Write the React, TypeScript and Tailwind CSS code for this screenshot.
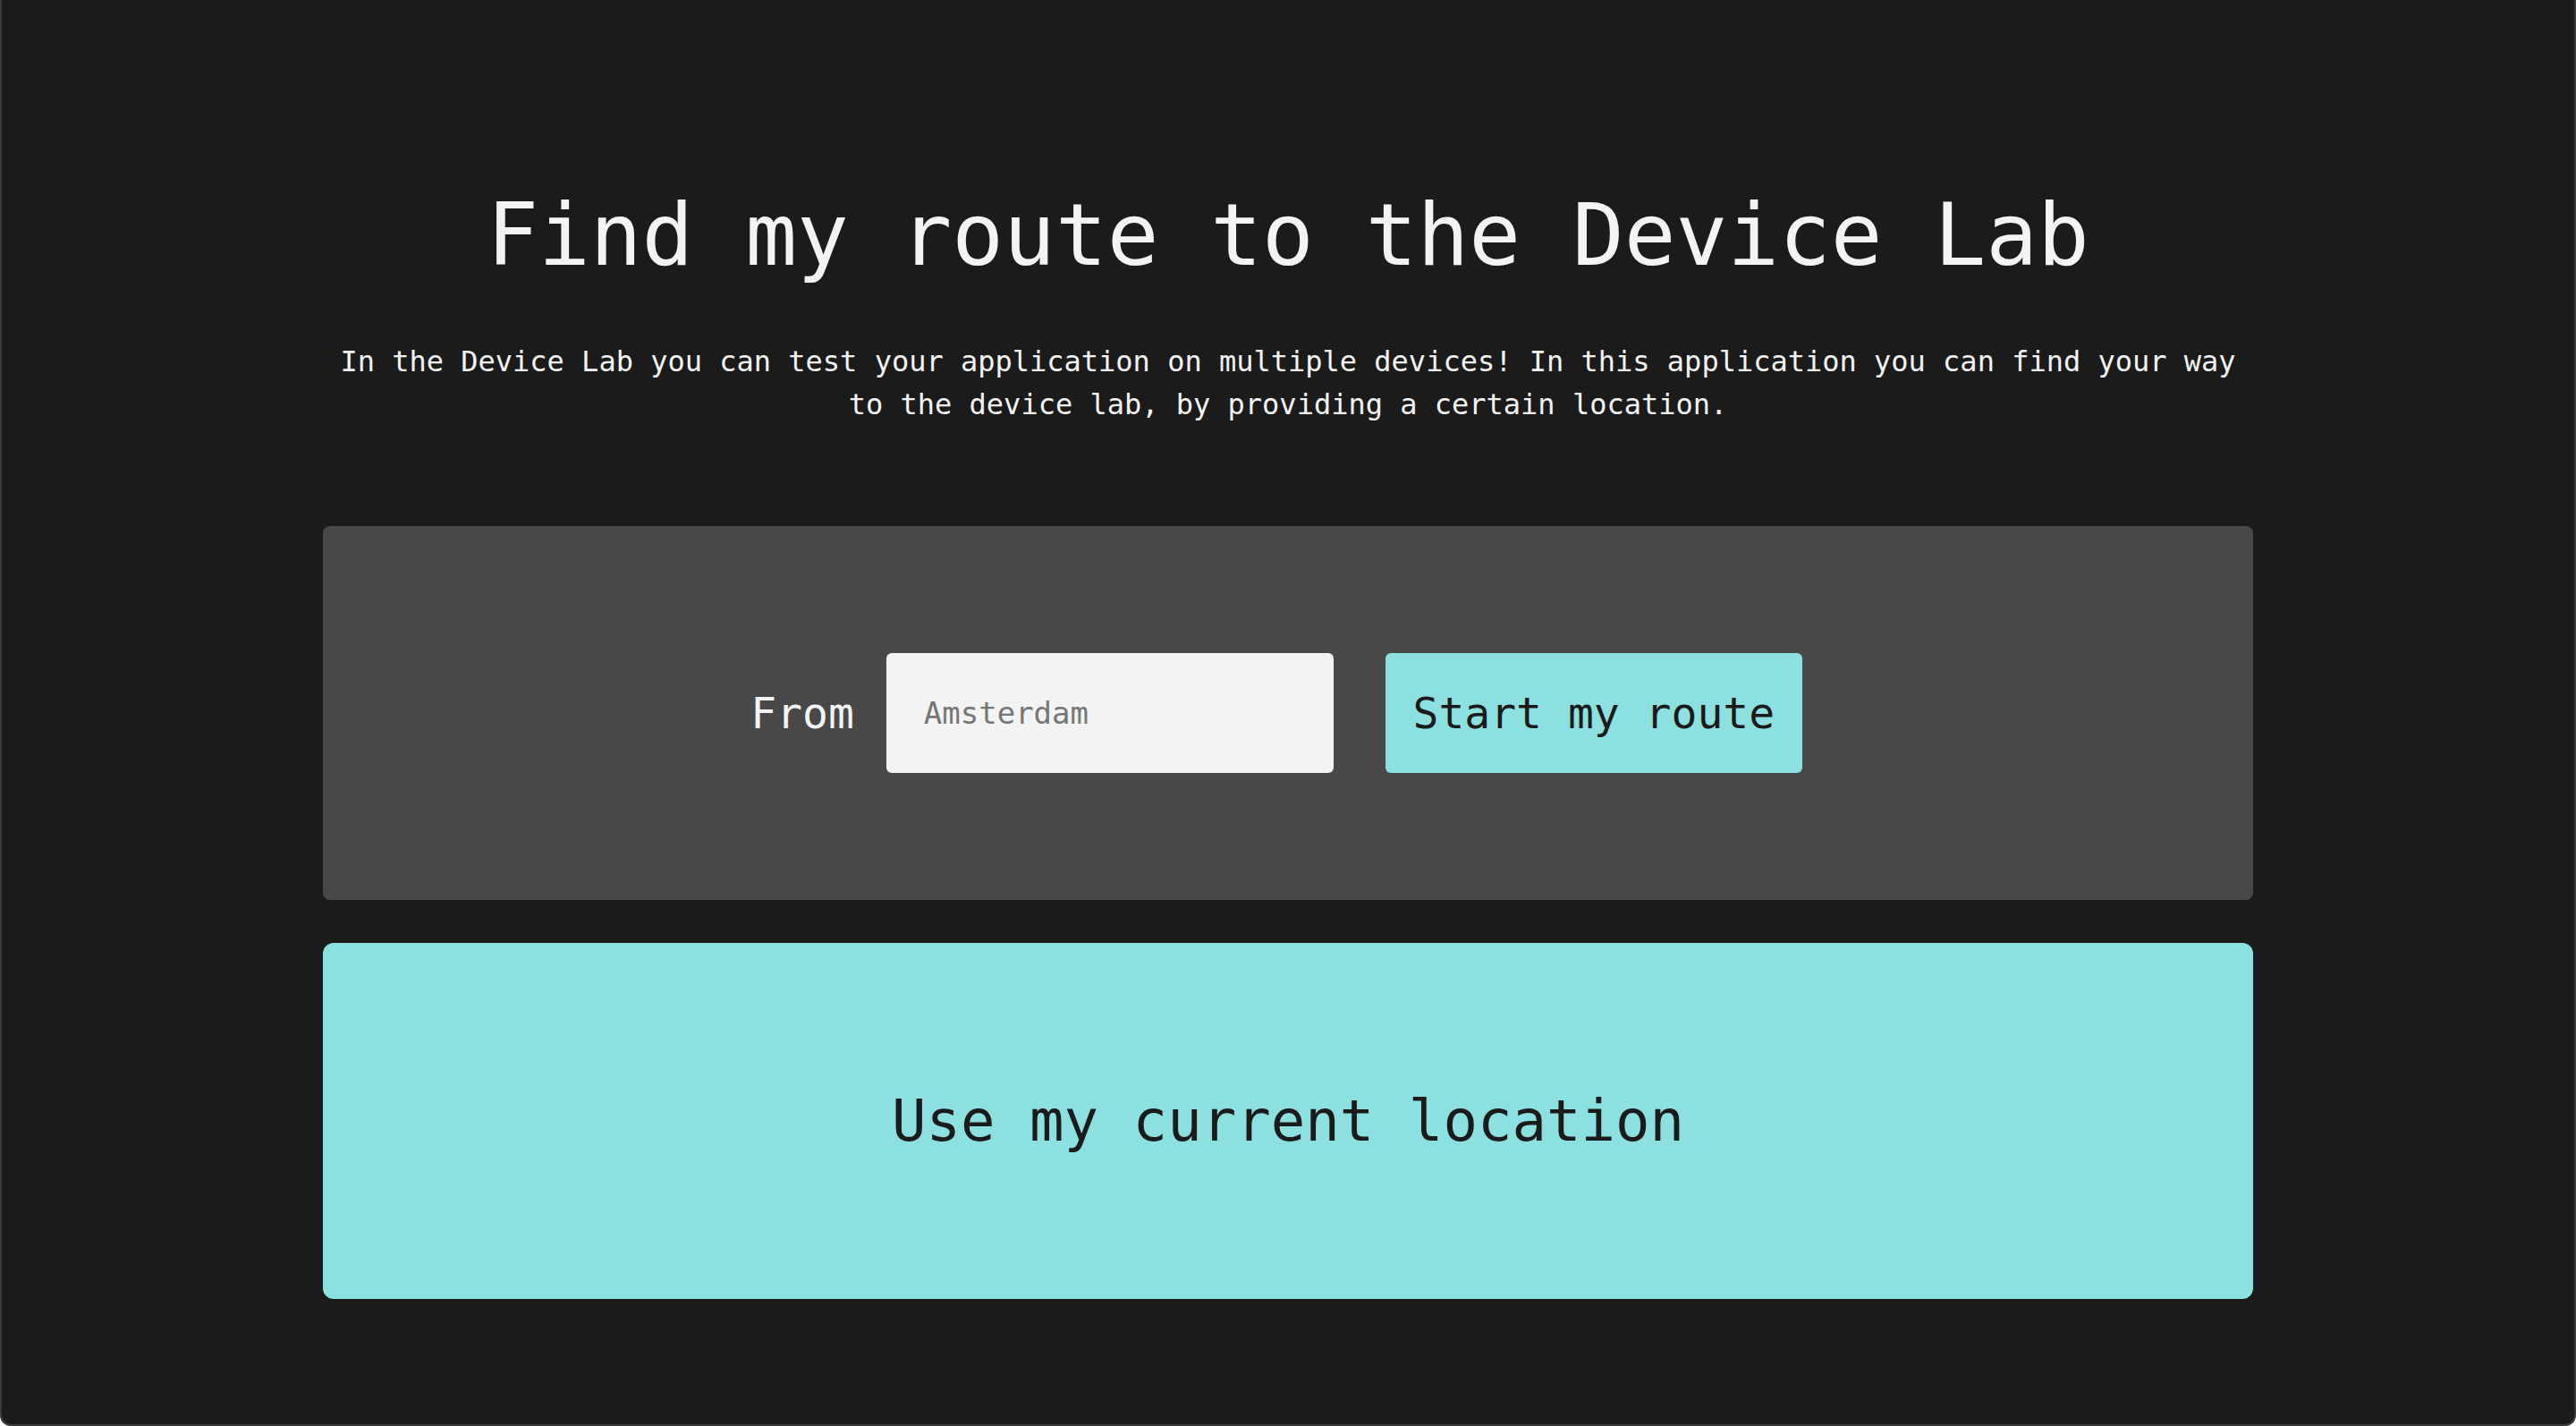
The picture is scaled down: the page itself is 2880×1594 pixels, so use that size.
import React from "react";

export default function App() {
  const mono = { fontFamily: '"DejaVu Sans Mono", "Liberation Mono", monospace' };
  return (
    <div
      className="w-full h-[1594px] bg-[#1b1b1b] border-l-2 border-r-2 border-b-2 border-[#3a3a3a] rounded-b-[12px] overflow-hidden"
      style={mono}
    >
      <div className="w-[2158px] mx-auto flex flex-col">
        <h1 className="mt-[206px] text-center text-[96px] leading-[115px] text-[#f3f3f3]">
          Find my route to the Device Lab
        </h1>
        <p className="mt-[59px] text-center text-[32px] leading-[48px] text-[#f3f3f3]">
          In the Device Lab you can test your application on multiple devices! In this application you can find your way to the device lab, by providing a certain location.
        </p>
        <div className="mt-[112px] h-[418px] rounded-[8px] bg-[#484848] flex items-center justify-center pr-[26px]">
          <label className="text-[48px] leading-[60px] text-[#f3f3f3] mr-[36px]">From</label>
          <input
            type="text"
            placeholder="Amsterdam"
            className="w-[500px] h-[134px] rounded-[6px] bg-[#f3f3f3] pl-[42px] text-[34px] font-medium text-[#1b1b1b] placeholder:text-[#767676] outline-none"
            style={mono}
          />
          <button
            className="ml-[58px] w-[466px] h-[134px] rounded-[6px] bg-[#8ce1e0] text-center text-[48px] text-[#1b1b1b]"
            style={mono}
          >
            Start my route
          </button>
        </div>
        <button
          className="mt-[48px] h-[398px] w-full rounded-[12px] bg-[#8ce1e0] flex items-center justify-center text-[64px] text-[#1b1b1b]"
          style={mono}
        >
          Use my current location
        </button>
      </div>
    </div>
  );
}
